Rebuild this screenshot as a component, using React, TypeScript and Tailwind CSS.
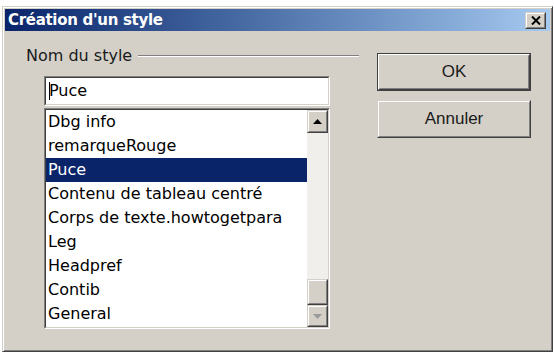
import React from "react";

const items = [
  "Dbg info",
  "remarqueRouge",
  "Puce",
  "Contenu de tableau centré",
  "Corps de texte.howtogetpara",
  "Leg",
  "Headpref",
  "Contib",
  "General",
];

function Sunken({ className, children }: { className: string; children: React.ReactNode }) {
  return (
    <div className={"border border-t-[#808080] border-l-[#808080] border-r-[#ffffff] border-b-[#ffffff] " + className}>
      <div className="w-full h-full border border-t-[#404040] border-l-[#404040] border-r-[#d4d0c8] border-b-[#d4d0c8] bg-white overflow-hidden">
        {children}
      </div>
    </div>
  );
}

function RaisedBox({ className, children }: { className: string; children?: React.ReactNode }) {
  return (
    <div className={"border border-t-[#d4d0c8] border-l-[#d4d0c8] border-r-[#404040] border-b-[#404040] " + className}>
      <div className="w-full h-full border border-t-[#ffffff] border-l-[#ffffff] border-r-[#808080] border-b-[#808080] bg-[#d4d0c8] flex items-center justify-center">
        {children}
      </div>
    </div>
  );
}

export default function App() {
  return (
    <div className="w-[554px] h-[354px] bg-white pt-[6px] pl-[2px] overflow-hidden">
      <div className="w-[551px] h-[346px] bg-[#d4d0c8] border border-t-[#d4d0c8] border-l-[#d4d0c8] border-r-[#404040] border-b-[#404040] shadow-[inset_1px_1px_#ffffff,inset_-1px_-1px_#808080] p-[2px] flex flex-col">
        {/* Title bar */}
        <div className="h-[22px] shrink-0 bg-gradient-to-r from-[#0a246a] to-[#a6caf0] flex items-center justify-between pl-[3px] pr-[4px]">
          <span className="font-['DejaVu_Sans',sans-serif] font-bold text-[15px] leading-none text-white tracking-[-0.3px]">
            Création d'un style
          </span>
          <RaisedBox className="w-[21px] h-[17px]">
            <svg width="10" height="9" viewBox="0 0 10 9">
              <path d="M1 0.5 L9 8.5 M9 0.5 L1 8.5" stroke="#000" strokeWidth="2" />
            </svg>
          </RaisedBox>
        </div>

        {/* Body */}
        <div className="flex pl-[21px] pt-[15px]">
          <div className="w-[333px] flex flex-col font-['DejaVu_Sans',sans-serif] text-[16px] text-black">
            <div className="h-[19px] flex items-center">
              <span className="leading-none text-[#1a1a1a]">Nom du style</span>
              <div className="flex-1 ml-[6px] border-t border-t-[#808080] border-b border-b-[#ffffff]" />
            </div>
            <Sunken className="ml-[18px] mt-[11px] w-[286px] h-[30px]">
              <div className="h-full flex items-center pl-[3px] leading-none">
                <span className="inline-block w-[1px] h-[18px] bg-black" />
                <span className="-ml-[1px]">Puce</span>
              </div>
            </Sunken>
            <Sunken className="ml-[18px] mt-[2px] w-[286px] h-[221px]">
              <div className="flex h-full">
                <div className="flex-1 flex flex-col">
                  {items.map((it) => (
                    <div
                      key={it}
                      className={
                        "h-[24px] leading-[24px] pl-[2px] whitespace-nowrap " +
                        (it === "Puce" ? "bg-[#0a246a] text-white" : "text-black")
                      }
                    >
                      {it}
                    </div>
                  ))}
                </div>
                <div className="w-[21px] h-full flex flex-col bg-[#f1efeb]">
                  <RaisedBox className="w-[21px] h-[23px]">
                    <svg width="9" height="5" viewBox="0 0 9 5">
                      <path d="M4.5 0 L9 5 L0 5 Z" fill="#000" />
                    </svg>
                  </RaisedBox>
                  <div className="flex-1" />
                  <RaisedBox className="w-[21px] h-[26px]" />
                  <RaisedBox className="w-[21px] h-[22px]">
                    <svg width="9" height="5" viewBox="0 0 9 5">
                      <path d="M0 0 L9 0 L4.5 5 Z" fill="#9a9a9a" />
                    </svg>
                  </RaisedBox>
                </div>
              </div>
            </Sunken>
          </div>

          <div className="ml-[18px] pt-[7px] flex flex-col gap-[9px] font-['Liberation_Sans',sans-serif] text-[17px] text-[#1a1a1a]">
            <div className="w-[154px] h-[38px] border border-[#404040]">
              <div className="w-full h-full border border-t-[#ffffff] border-l-[#ffffff] border-r-[#404040] border-b-[#404040]">
                <div className="w-full h-full border border-t-[#d4d0c8] border-l-[#d4d0c8] border-r-[#808080] border-b-[#808080] flex items-center justify-center">
                  OK
                </div>
              </div>
            </div>
            <RaisedBox className="w-[154px] h-[38px]">Annuler</RaisedBox>
          </div>
        </div>
      </div>
    </div>
  );
}
